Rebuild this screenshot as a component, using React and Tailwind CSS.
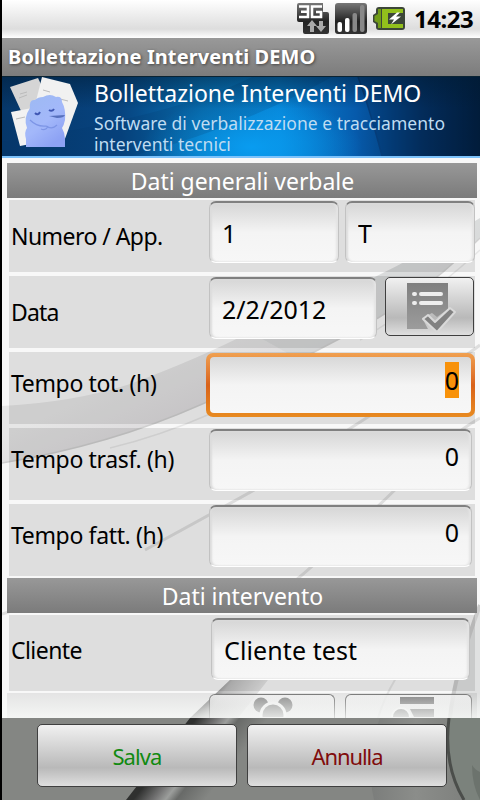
import React, { useState } from 'react';

const INPUT = 'h-[62px] rounded-[7px] border border-t-2 border-[#c2c2c2] border-t-[#808080] border-b-white bg-linear-to-b from-[#d6d6d6] via-[#f4f4f4] via-50% to-[#f7f7f7] shadow-[inset_2px_0_2px_#dcdcdc,inset_-2px_0_2px_#e4e4e4] text-[25px] text-black outline-none min-w-0';
const BUTTON = 'border border-[#3f3f3f] bg-linear-to-b from-[#f1f1f1] via-[#b9b9b9] via-70% to-[#dfdfdf]';

const StatusBar = () => (
  <div className="h-[38px] flex items-start justify-end bg-linear-to-b from-white via-[#dddddd] via-76% to-white pt-[3px] pr-[5px]">
    <svg width="32" height="32" viewBox="0 0 32 32" className="mr-[6px]">
      <defs>
        <linearGradient id="dark" x1="0" y1="0" x2="0" y2="1">
          <stop offset="0" stopColor="#777" />
          <stop offset="0.6" stopColor="#222" />
          <stop offset="1" stopColor="#333" />
        </linearGradient>
      </defs>
      <path d="M2 0H26V9H30Q32 9 32 11V29Q32 31 30 31H8Q6 31 6 29V19H2Q0 19 0 17V2Q0 0 2 0Z" fill="url(#dark)" />
      <path d="M2 3.500H11V14H2M4 8.700H11M25 3.500H15V14H24V9H19" fill="none" stroke="#fff" strokeWidth="2.6" />
      <path d="M15 17l5 6h-3v6h-4v-6h-3zM24 29l-5-6h3v-5h4v5h3z" fill="#aaa" />
    </svg>
    <svg width="32" height="32" viewBox="0 0 32 32" className="mr-[6px]">
      <rect width="32" height="31" rx="3" fill="url(#dark)" />
      <rect x="2.5" y="19" width="4.5" height="10" rx="2" fill="#fff" />
      <rect x="10" y="15" width="4.5" height="14" rx="2" fill="#fff" />
      <rect x="17.5" y="10" width="4.5" height="19" rx="2" fill="#888" />
      <rect x="25" y="2" width="4.5" height="27" rx="2" fill="#888" />
    </svg>
    <svg width="33" height="26" viewBox="0 0 33 26" className="mt-[3px] mr-[8px]">
      <path d="M6 1H29Q32 1 32 4V21Q32 24 29 24H6Q3 24 3 21V18L0 16V9L3 7V4Q3 1 6 1Z" fill="#3c4638" />
      <path d="M5 3H8V22H5V17L1.500 15V10L5 8Z" fill="#719c18" />
      <path d="M9 3H30V7H15V18H30V22H9Z" fill="#92c01c" />
      <path d="M24 6.500l-8 7h5l-3 5 10-8h-5l4-4z" fill="#fff" />
    </svg>
    <span className="text-[24px] leading-[32px] font-bold text-black tracking-[-0.5px] w-[61px] whitespace-nowrap">14:23</span>
  </div>
);

const Mascot = () => (
  <svg width="68" height="72" viewBox="0 0 68 72" className="shrink-0">
    <defs>
      <linearGradient id="body" x1="0" y1="0" x2="0.6" y2="1">
        <stop offset="0" stopColor="#9dbaf2" />
        <stop offset="0.6" stopColor="#a3b8fa" />
        <stop offset="1" stopColor="#8da2f4" />
      </linearGradient>
    </defs>
    <path d="M0 10L28 1L38 22L12 36Z" fill="#d5d5d5" />
    <path d="M1 35L22 31L26 66L10 69Z" fill="#f2f2f2" />
    <path d="M32 0L60 7L68 26L52 70L30 50L25 28Z" fill="#f1f1f1" />
    <path d="M9 21l8-3M10 17l7-2M33 13l7 2M50 22l8 2M6 42l9-2" stroke="#bbb" strokeWidth="1" />
    <path d="M20 31Q19 22 25 23Q28 20 33 20Q40 16 46 20Q52 19 52 25Q56 32 55 43Q54 48 52 51Q55 56 55 62V70H16V62Q14 55 17 51Q13 41 20 31Z" fill="url(#body)" />
    <path d="M20 43Q27 50 36 49Q42 53 47 48M38 49Q36 54 31 52" fill="none" stroke="#7d95e6" strokeWidth="1.2" />
    <path d="M39 39L55 38Q54 41 47 41Z" fill="#5770bd" />
    <path d="M25 36q3 3 5 -1M39 33q3 2 5 -1" fill="none" stroke="#3f57b3" strokeWidth="2" />
  </svg>
);

const Banner = () => (
  <div className="relative h-[82px] border-t border-[#0a2333] border-b-2 border-b-[#7cc2fb] bg-[#06315f]">
    <svg width="478" height="79" viewBox="0 0 478 79" className="absolute inset-0">
      <defs>
        <linearGradient id="sky">
          <stop offset="0" stopColor="#06376a" />
          <stop offset="0.25" stopColor="#074480" />
          <stop offset="0.42" stopColor="#0872b5" />
          <stop offset="0.58" stopColor="#0786d8" />
          <stop offset="0.74" stopColor="#065aab" />
          <stop offset="0.88" stopColor="#04305f" />
          <stop offset="1" stopColor="#021b35" />
        </linearGradient>
        <radialGradient id="glow">
          <stop offset="0" stopColor="#099cf0" />
          <stop offset="1" stopColor="#099cf0" stopOpacity="0" />
        </radialGradient>
        <linearGradient id="shade" x1="0" y1="0" x2="0" y2="1">
          <stop offset="0" stopColor="#001b33" stopOpacity="0.5" />
          <stop offset="0.4" stopColor="#001b33" stopOpacity="0" />
        </linearGradient>
      </defs>
      <rect width="478" height="79" fill="url(#sky)" />
      <ellipse cx="250" cy="70" rx="110" ry="50" fill="url(#glow)" />
      <path d="M130 79Q240 50 330 0H250Q170 40 0 65V79Z" fill="#04366b" opacity="0.18" />
      <path d="M356 0Q366 26 380 79H478V0Z" fill="#00204b" opacity="0.25" />
      <path d="M356 0Q366 26 380 79" fill="none" stroke="#063d79" strokeWidth="1.5" />
      <rect width="478" height="79" fill="url(#shade)" />
    </svg>
    <div className="relative flex pl-[8px]">
      <Mascot />
      <div className="pl-[16px] whitespace-nowrap">
        <div className="text-[23px] leading-[32px] text-white">Bollettazione Interventi DEMO</div>
        <div className="mt-[4px] text-[17.5px] leading-[21px] tracking-[0.02px] text-[#bfdcf2]">
          Software di verbalizzazione e tracciamento
          <br />
          interventi tecnici
        </div>
      </div>
    </div>
  </div>
);

// grey swooshes behind the form
const Swooshes = () => (
  <svg width="478" height="560" viewBox="2 158 478 560" className="absolute inset-0">
    <defs>
      <linearGradient id="band" gradientUnits="userSpaceOnUse" x1="180" y1="355" x2="205" y2="410">
        <stop offset="0" stopColor="#e6e6e6" />
        <stop offset="1" stopColor="#dddbdd" />
      </linearGradient>
      <linearGradient id="beam" gradientUnits="userSpaceOnUse" x1="205" y1="695" x2="240" y2="722">
        <stop offset="0" stopColor="#777777" />
        <stop offset="0.3" stopColor="#bdbdbd" />
        <stop offset="1" stopColor="#e8e8e8" />
      </linearGradient>
    </defs>
    <path d="M2 406Q75 402 130 384Q200 358 250 332L375 277Q430 250 480 218V238Q430 288 378 318Q290 367 200 405Q110 445 2 463Z" fill="url(#band)" />
    <path d="M375 277Q430 250 480 218V238Q430 288 378 318L300 360L250 332Z" fill="#cdd0d0" opacity="0.45" />
    <path d="M2 463Q110 445 200 405Q290 367 378 318Q430 288 480 238" fill="none" stroke="#d0d0d0" strokeWidth="1.5" />
    <path d="M110 448Q160 436 210 414M360 340Q420 305 480 250" fill="none" stroke="#e6e6e6" strokeWidth="1.500" />
    <path d="M145 550Q215 512 290 470Q330 440 400 397Q445 372 480 345M282 592Q350 535 410 475Q450 435 480 418M2 614Q45 602 82 583" fill="none" stroke="#dedede" strokeWidth="3" />
    <path d="M190 718L232 678L268 680L238 718Z" fill="url(#beam)" />
    <path d="M378 718Q384 698 396 678" fill="none" stroke="#e5e5e5" strokeWidth="2" />
    <path d="M450 718Q454 675 480 605V718Z" fill="#e0e1e1" />
    <path d="M450 718Q454 675 480 605" fill="none" stroke="#cccccc" strokeWidth="4" />
  </svg>
);

const Section = ({ title }) => (
  <div className="ml-[5px] mr-[3px] h-[35px] bg-linear-to-b from-[#989898] to-[#7b7b7b] text-center text-[23px] leading-[36px] tracking-[-0.04px] text-white">
    <span className="pl-px">{title}</span>
  </div>
);

const Row = ({ label, className = 'h-[72px]', labelClass = 'pt-[20px] tracking-[-0.35px]', children }) => (
  <div className={`ml-[7px] mr-[5px] flex bg-black/10 ${className}`}>
    <div className={`w-[200px] shrink-0 pl-[2px] text-[23px] leading-[32px] text-black whitespace-nowrap ${labelClass}`}>{label}</div>
    {children}
  </div>
);

const ListIcon = () => (
  <svg width="52" height="54" viewBox="0 0 52 54" className="mx-auto">
    <defs>
      <linearGradient id="paper" x1="0" y1="0" x2="0" y2="1">
        <stop offset="0" stopColor="#7f7f7f" />
        <stop offset="1" stopColor="#9c9c9c" />
      </linearGradient>
    </defs>
    <path d="M3 3H44V29L33 37L28 33L18 38L24 49H3Z" fill="url(#paper)" />
    <path d="M10 14H11M17 14H37M10 23H11M17 23H37" stroke="#eee" strokeWidth="4" strokeLinecap="round" />
    <path d="M19 39L24 35L31 42L46 28L51 32L33 52Z" fill="#818181" stroke="#d9d9d9" strokeWidth="2" strokeLinejoin="round" />
  </svg>
);

const CutButton = ({ className, children }) => (
  <div className={`h-[24px] rounded-t-[6px] border border-b-0 border-[#777777] bg-linear-to-b from-[#eeeeee]/90 to-[#e1e1e1]/30 ${className}`}>{children}</div>
);

export default function App() {
  const [form, setForm] = useState({ numero: '1', app: 'T', data: '2/2/2012', tot: '0', trasf: '0', fatt: '0', cliente: 'Cliente test' });
  const bind = (key) => ({ value: form[key], onChange: (e) => setForm({ ...form, [key]: e.target.value }) });

  return (
    <div className="w-[480px] h-[800px] overflow-hidden bg-black pl-[2px] font-['Noto_Sans',sans-serif]">
      <StatusBar />
      <div className="h-[38px] bg-linear-to-b from-[#999999] to-[#7c7c7c] pl-[6px] text-[20px] leading-[37px] font-bold tracking-[0.1px] text-white whitespace-nowrap [text-shadow:1px_1px_3px_#444]">
        <span>Bollettazione Interventi DEMO</span>
      </div>
      <Banner />

      <div className="relative h-[560px] overflow-hidden bg-[#f8f8f8]">
        <Swooshes />
        <div className="relative pt-[5px]">
          <Section title="Dati generali verbale" />
          <div className="mt-[2px] flex flex-col gap-[4px]">
            <Row label="Numero / App." labelClass="pt-[20px] tracking-[-0.55px]">
              <input {...bind('numero')} className={`${INPUT} mt-px w-[130px] pl-[12px]`} />
              <input {...bind('app')} className={`${INPUT} mt-px ml-[6px] w-[130px] pl-[12px]`} />
            </Row>
            <Row label="Data" labelClass="pt-[20px] tracking-[-0.8px]">
              <input {...bind('data')} className={`${INPUT} mt-px w-[168px] pl-[12px]`} />
              <button className={`${BUTTON} mt-px ml-[8px] h-[59px] w-[89px] rounded-[5px]`}>
                <ListIcon />
              </button>
            </Row>
            <Row label="Tempo tot. (h)" labelClass="pt-[15px] tracking-[-0.35px]">
              <div className="mt-px -ml-[3px] h-[64px] w-[269px] rounded-[7px] bg-linear-to-b from-[#f0a050] via-[#d9621a] to-[#e88a20] p-[4px]">
                <div className="flex h-full justify-end rounded-[4px] bg-linear-to-b from-[#d8d8d8] via-[#f4f4f4] via-50% to-[#f7f7f7] pt-[5px] pr-[12px]">
                  <span className="h-[36px] bg-[#f8920a] text-[25px] leading-[37px]">{form.tot}</span>
                </div>
              </div>
            </Row>
            <Row label="Tempo trasf. (h)" labelClass="pt-[15px] tracking-[-0.35px]">
              <input {...bind('trasf')} className={`${INPUT} mt-px w-[263px] pr-[12px] pb-[9px] text-right`} />
            </Row>
            <Row label="Tempo fatt. (h)" labelClass="pt-[15px] tracking-[-0.35px]">
              <input {...bind('fatt')} className={`${INPUT} mt-px w-[263px] pr-[12px] pb-[9px] text-right`} />
            </Row>
          </div>
          <div className="mt-[2px]">
            <Section title="Dati intervento" />
          </div>
          <div className="mt-[2px]">
            <Row label="Cliente" className="h-[76px]" labelClass="pt-[19px] tracking-[-0.55px]">
              <input {...bind('cliente')} className={`${INPUT} mt-[3px] ml-[2px] w-[259px] pl-[12px] tracking-[0.1px]`} />
            </Row>
            <div className="mt-[2px] ml-[5px] mr-[3px] flex h-[25px] bg-black/8 pl-[202px]">
              <CutButton className="mt-px w-[126px]">
                <svg width="40" height="22" viewBox="0 0 40 22" className="ml-[43px]">
                  <circle cx="8" cy="10" r="7.500" fill="#8e8e8e" />
                  <circle cx="32" cy="10" r="7.500" fill="#8e8e8e" />
                  <circle cx="20" cy="20" r="12" fill="#999" stroke="#eee" strokeWidth="3" />
                </svg>
              </CutButton>
              <CutButton className="mt-px ml-[10px] w-[127px]">
                <svg width="46" height="22" viewBox="0 0 46 22" className="ml-[44px]">
                  <path d="M10 2H44V9H10ZM20 14H44V22H24Z" fill="#858585" />
                  <circle cx="11" cy="22" r="9" fill="#999" stroke="#eee" strokeWidth="2" />
                </svg>
              </CutButton>
            </div>
          </div>
        </div>
        <div className="absolute inset-x-0 bottom-0 h-[25px] bg-linear-to-b from-transparent to-[#fafcfa]/75" />
      </div>

      <div className="relative h-[82px] bg-[#848683]">
        <svg width="478" height="82" viewBox="2 718 478 82" className="absolute inset-0">
          <defs>
            <linearGradient id="streak" gradientUnits="userSpaceOnUse" x1="160" y1="765" x2="205" y2="800">
              <stop offset="0" stopColor="#2f302f" />
              <stop offset="0.3" stopColor="#777" />
              <stop offset="0.45" stopColor="#9c9e9c" />
              <stop offset="0.6" stopColor="#686a68" />
              <stop offset="1" stopColor="#848683" />
            </linearGradient>
            <linearGradient id="curve">
              <stop offset="0" stopColor="#7b7d7b" />
              <stop offset="0.5" stopColor="#8b8d8a" />
              <stop offset="1" stopColor="#7f817e" />
            </linearGradient>
          </defs>
          <path d="M126 800L190 718H280L215 800Z" fill="url(#streak)" />
          <path d="M374 800Q364 755 380 718H448Q445 765 462 800Z" fill="url(#curve)" />
          <path d="M449 718Q443 765 464 800H480V718Z" fill="#7b827c" />
          <path d="M449 718Q443 765 464 800" fill="none" stroke="#4b4e4b" strokeWidth="3" />
          <path d="M472 765Q475 770 480 772V800Q472 785 472 765Z" fill="#6c736d" />
        </svg>
        <div className="relative flex gap-[10px] pt-[6px] pl-[35px]">
          <button className={`${BUTTON} h-[63px] w-[200px] rounded-[5px] pt-[2px] text-[22px] tracking-[-0.9px] text-[#118a11]`}>Salva</button>
          <button className={`${BUTTON} h-[63px] w-[200px] rounded-[5px] pt-[2px] text-[22px] tracking-[-1.1px] text-[#800c0c]`}>Annulla</button>
        </div>
      </div>
    </div>
  );
}
